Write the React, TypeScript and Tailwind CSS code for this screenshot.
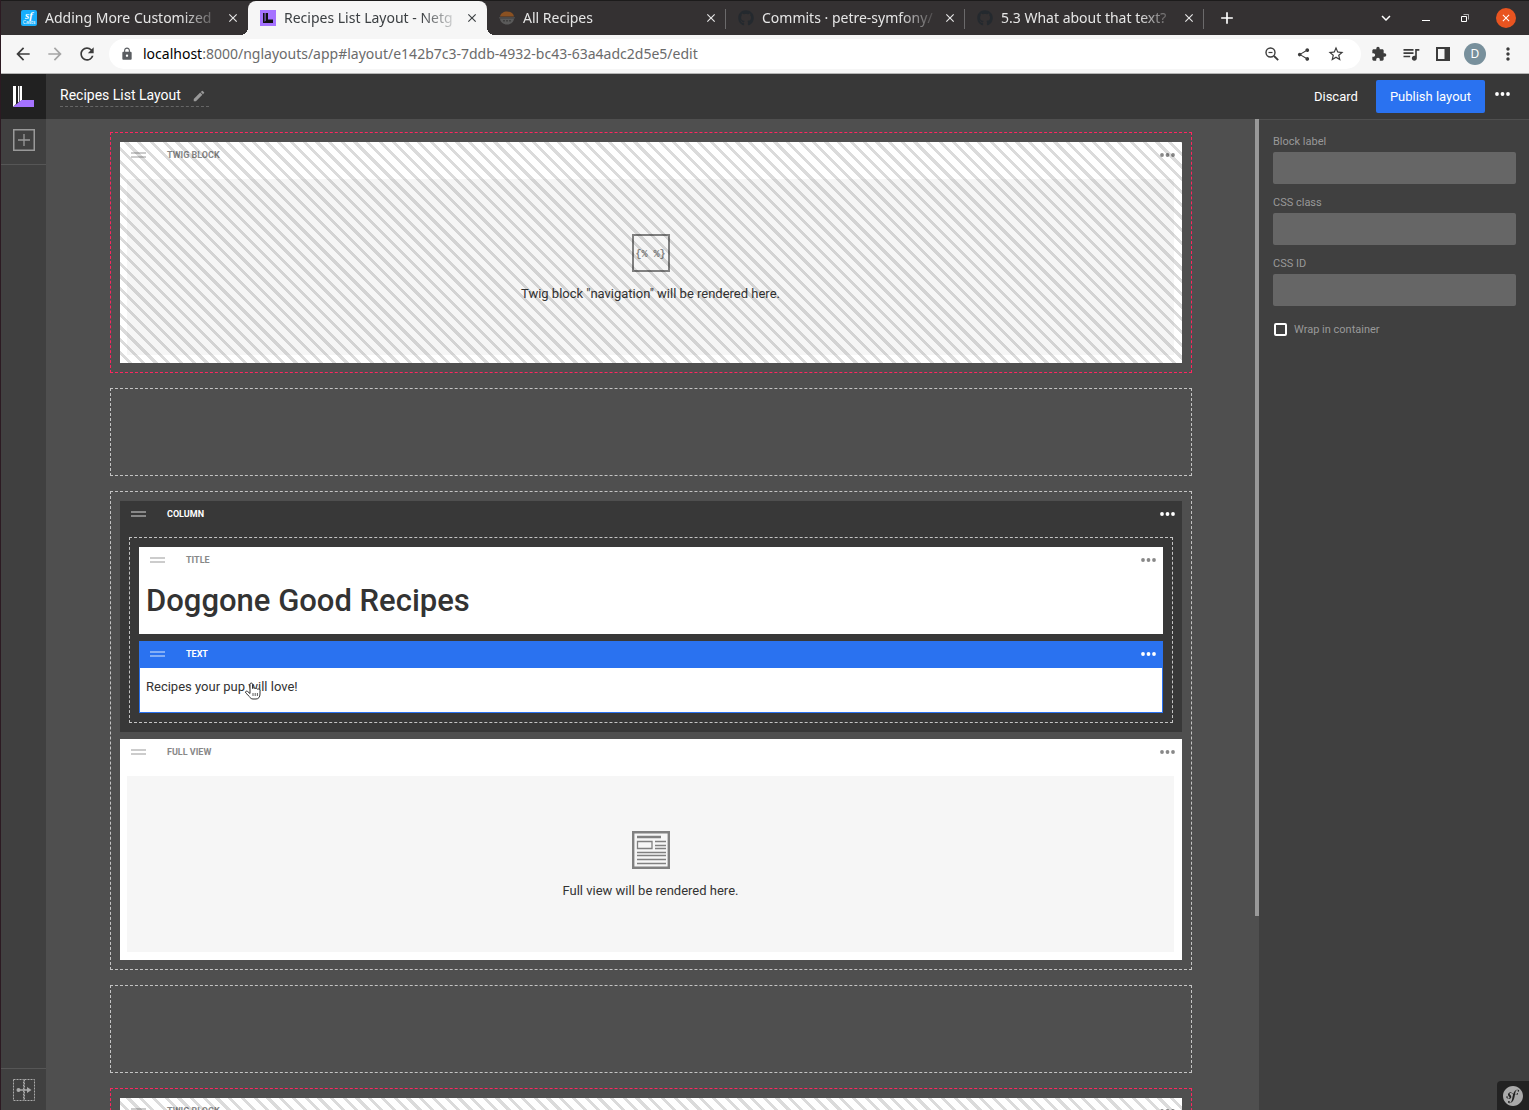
import type { ReactNode } from "react";
import {
  MdArrowBack,
  MdArrowForward,
  MdClose,
  MdEdit,
  MdExtension,
  MdKeyboardArrowDown,
  MdLock,
  MdMoreVert,
  MdQueueMusic,
  MdRefresh,
  MdShare,
  MdStarBorder,
  MdAdd,
} from "react-icons/md";
import { FaGithub } from "react-icons/fa";
import { SiSymfony } from "react-icons/si";

const chromeFont = "font-['Noto_Sans',sans-serif]";

function LayoutsFavicon() {
  return (
    <svg viewBox="0 0 16 16" className="size-4">
      <rect width="16" height="16" fill="#a572ff" />
      <path d="M3 3h1.600v8.600L3 13zM5.600 3h2.400v6.500h5V13H3l2.600-2.200z" fill="#111" />
    </svg>
  );
}

function BurgerFavicon() {
  return (
    <svg viewBox="0 0 16 16" className="size-4">
      <path d="M1 6.500C1.500 3.500 4.500 1.500 8 1.500S14.500 3.500 15 6.500z" fill="#8a5122" />
      <path d="M0 7h16v1.500H0z" fill="#4a4a4a" />
      <path d="M1 8.500h14c-.3 3.500-3 6-7 6s-6.700-2.500-7-6z" fill="#5a5a5a" />
      <path d="M4 10h2v1.500H4zM7 10h2v1.500H7zM10 10h2v1.500h-2z" fill="#3f3f3f" />
    </svg>
  );
}

function SfCastsFavicon() {
  return (
    <span className="flex size-4 flex-col items-center justify-center rounded-xs bg-[#18aefc] text-white">
      <span className="font-['Liberation_Serif',serif] text-[11px] leading-[9px] font-bold italic">sf</span>
      <span className="text-[5px] leading-[5px]">Casts</span>
    </span>
  );
}

function ZoomOutIcon() {
  return (
    <svg viewBox="0 0 14 14" className="size-3.5" fill="none" stroke="currentColor" strokeWidth="1.400">
      <circle cx="5.500" cy="5.500" r="4.500" />
      <path d="M9 9l4.200 4.200" strokeWidth="1.800" />
      <path d="M3.500 5.500h4" strokeWidth="1.200" />
    </svg>
  );
}

type TabProps = { icon: ReactNode; title: string; active?: boolean; divider?: boolean };

function Tab({ icon, title, active, divider }: TabProps) {
  return (
    <div
      className={
        "relative flex w-[239px] min-w-0 items-center gap-2 pr-2 pl-3 " +
        (active ? "rounded-t-lg bg-[#f6f6f6] text-[#3c4043]" : "text-[#e6e6e6]")
      }
    >
      {active && (
        <>
          <span className="absolute bottom-0 -left-2 size-2 bg-[radial-gradient(circle_at_0_0,transparent_8px,#f6f6f6_8px)]" />
          <span className="absolute -right-2 bottom-0 size-2 bg-[radial-gradient(circle_at_100%_0,transparent_8px,#f6f6f6_8px)]" />
        </>
      )}
      <span className="shrink-0">{icon}</span>
      <span className="min-w-0 flex-1 overflow-hidden text-sm whitespace-nowrap [mask-image:linear-gradient(to_right,black_calc(100%-40px),transparent)]">
        {title}
      </span>
      <button aria-label={"Close " + title} className="-ml-1 shrink-0">
        <MdClose className="size-3.5" />
      </button>
      {divider && <span className="absolute top-2 right-0 h-5 w-px bg-[#6b6a6b]" />}
    </div>
  );
}

function BrowserChrome() {
  return (
    <div className={"shrink-0 " + chromeFont}>
      <div className="flex h-[35px] border-t border-[#1c1b1b] bg-[#343132] pl-2">
        <Tab icon={<SfCastsFavicon />} title="Adding More Customized" />
        <Tab icon={<LayoutsFavicon />} title="Recipes List Layout - Netg" active />
        <Tab icon={<BurgerFavicon />} title="All Recipes" divider />
        <Tab icon={<FaGithub className="size-4 text-[#24292e]" />} title="Commits · petre-symfony/" divider />
        <Tab icon={<FaGithub className="size-4 text-[#24292e]" />} title="5.3 What about that text?" divider />
        <button aria-label="New tab" className="ml-[13px] text-white">
          <MdAdd className="size-5" />
        </button>
        <div className="ml-auto flex items-center gap-[23px] pr-[13px] text-white">
          <button aria-label="Search tabs">
            <MdKeyboardArrowDown className="size-[18px]" />
          </button>
          <button aria-label="Minimize" className="flex size-4 items-center justify-center">
            <span className="mt-1 h-px w-2 bg-white" />
          </button>
          <button aria-label="Restore" className="flex size-4 items-center justify-center">
            <svg viewBox="0 0 8 8" className="size-2 overflow-visible" fill="none" stroke="white">
              <path d="M.5 2.500h5v5h-5z" />
              <path d="M2.500 .5h5v5" strokeOpacity=".6" />
            </svg>
          </button>
          <button aria-label="Close window" className="flex size-5 items-center justify-center rounded-full bg-[#e95420]">
            <MdClose className="size-3" />
          </button>
        </div>
      </div>
      <div className="flex h-[39px] items-center border-b border-[#b4b4b4] bg-[#f6f6f6] pr-[11px] pl-3 text-[#3c3c3c]">
        <div className="flex items-center gap-3">
          <button aria-label="Back">
            <MdArrowBack className="size-5" />
          </button>
          <button aria-label="Forward" className="text-[#a5a5a5]">
            <MdArrowForward className="size-5" />
          </button>
          <button aria-label="Reload">
            <MdRefresh className="size-5" />
          </button>
        </div>
        <div className="mr-[7px] ml-3 flex h-[30px] flex-1 items-center rounded-full bg-white pr-4 pl-[11px]">
          <MdLock className="mr-[9px] size-3.5 text-[#5a5d61]" />
          <a href="#layout" className="flex-1 text-sm text-[#6b6b6b]">
            <span className="text-black">localhost</span>
            :8000/nglayouts/app#layout/e142b7c3-7ddb-4932-bc43-63a4adc2d5e5/edit
          </a>
          <div className="flex items-center gap-4">
            <button aria-label="Zoom" className="mr-px">
              <ZoomOutIcon />
            </button>
            <button aria-label="Share">
              <MdShare className="size-[15px]" />
            </button>
            <button aria-label="Bookmark">
              <MdStarBorder className="size-[18px]" />
            </button>
          </div>
        </div>
        <div className="flex items-center pl-[3px]">
          <button aria-label="Extensions">
            <MdExtension className="size-4" />
          </button>
          <button aria-label="Media" className="ml-3.5">
            <MdQueueMusic className="size-5" />
          </button>
          <button aria-label="Side panel" className="ml-[15px]">
            <svg viewBox="0 0 14 14" className="size-3.5" fill="none">
              <path d="M1 1h12v12H1z" stroke="#3c3c3c" strokeWidth="2" />
              <path d="M8.500 0H14v14H8.500z" fill="#3c3c3c" />
            </svg>
          </button>
          <button
            aria-label="Profile"
            className="ml-3.5 flex size-[22px] items-center justify-center rounded-full bg-[#78909c] text-xs text-white"
          >
            D
          </button>
          <button aria-label="Menu" className="ml-3">
            <MdMoreVert className="size-5" />
          </button>
        </div>
      </div>
    </div>
  );
}

function Dots({ className }: { className: string }) {
  return (
    <svg viewBox="0 0 15 4" className={"h-1 w-[15px] " + className} fill="currentColor">
      <circle cx="2" cy="2" r="1.900" />
      <circle cx="7.500" cy="2" r="1.900" />
      <circle cx="13" cy="2" r="1.900" />
    </svg>
  );
}

function AppHeader() {
  return (
    <header className="flex h-[45px] shrink-0 bg-[#383838] text-white">
      <a href="#home" aria-label="Home" className="flex w-[45px] items-center justify-center bg-[#212121]">
        <svg viewBox="0 0 21 21" className="size-[21px]">
          <path d="M0 0h3v18l-3 3zM5 0h1.300v15.500L5 16.500zM7 0h2v14l-2 1.500z" fill="#fff" />
          <path d="M0 21l8.500-7H21v7z" fill="#a572ff" />
        </svg>
      </a>
      <div className="flex flex-1 items-start justify-between pr-[19px] pl-3.5">
        <button className="mt-3 flex h-[21px] items-start gap-[11px] border-b border-dashed border-[#666] pr-[3px] text-sm leading-[18px]">
          Recipes List Layout
          <MdEdit className="mt-[3px] size-3.5 text-[#999]" />
        </button>
        <div className="flex text-[13px]">
          <button className="mt-1.5 h-[33px] px-[18px]">Discard</button>
          <button className="mt-1.5 h-[33px] rounded-xs bg-[#2a72f0] px-3.5">Publish layout</button>
          <button aria-label="More actions" className="mt-[18px] ml-2.5 h-1">
            <Dots className="text-white" />
          </button>
        </div>
      </div>
    </header>
  );
}

function SideBar() {
  return (
    <nav className="flex w-[45px] shrink-0 flex-col justify-between bg-[#404040]">
      <button
        aria-label="Add block"
        className="flex h-[46px] items-center justify-center border-b border-[#565656] pb-[3px]"
      >
        <svg viewBox="0 0 22 22" className="size-[22px]" fill="none" stroke="#999">
          <path d="M.75 .75h20.500v20.500H.75z" strokeWidth="1.500" />
          <path d="M11 5v12M5 11h12" strokeWidth="1.300" />
        </svg>
      </button>
      <button
        aria-label="Linked zones"
        className="flex h-[42px] items-center justify-center border-t border-[#565656]"
      >
        <svg viewBox="0 0 22 22" className="size-[22px]" fill="none" stroke="#aaa">
          <path d="M.5 .5h10v21H.5zM11.500 .5h10v21h-10z" strokeDasharray="2 1" />
          <path d="M5 11h10" strokeWidth="1.500" />
          <circle cx="5.500" cy="11" r="2" fill="#aaa" stroke="none" />
          <path d="M14 8l4.500 3-4.500 3z" fill="#aaa" stroke="none" />
        </svg>
      </button>
    </nav>
  );
}

function Zone({ linked, inner, children }: { linked?: boolean; inner?: boolean; children?: ReactNode }) {
  return (
    <section
      className={
        "flex shrink-0 flex-col gap-[7px] border border-dashed p-[9px] " +
        (inner ? "" : "min-h-[88px] ") +
        (linked ? "border-[#ff2560]" : "border-[#c4c4c4]")
      }
    >
      {children}
    </section>
  );
}

const tones = {
  light: { box: "bg-white", head: "text-[#888]", bar: "bg-[#ccc]" },
  dark: { box: "bg-[#383838]", head: "text-white", bar: "bg-[#888]" },
  active: { box: "border border-t-0 border-[#2a72f0] bg-white", head: "-mx-px bg-[#2a72f0] text-white", bar: "bg-[#83aef6]" },
};

type BlockProps = { name: string; tone?: keyof typeof tones; striped?: boolean; children: ReactNode };

function Block({ name, tone = "light", striped, children }: BlockProps) {
  const t = tones[tone];
  return (
    <article className={"relative " + t.box}>
      <div className={"flex h-[27px] items-center pr-[7px] pb-0.5 pl-[11px] " + t.head}>
        <span className="mr-[21px] flex w-[15px] flex-col gap-0.5">
          <span className={"h-0.5 " + t.bar} />
          <span className={"h-0.5 " + t.bar} />
        </span>
        <h2 className="pt-0.5 text-[9px] font-bold uppercase">{name}</h2>
        <button aria-label={name + " options"} className="ml-auto">
          <Dots className="text-current" />
        </button>
      </div>
      {children}
      {striped && (
        <div className="pointer-events-none absolute inset-0 bg-[repeating-linear-gradient(45deg,transparent_0_6px,rgba(0,0,0,0.14)_6px_9px)]" />
      )}
    </article>
  );
}

function Placeholder({ icon, text }: { icon: ReactNode; text: string }) {
  return (
    <div className="pt-2.5 pr-2 pb-2 pl-[7px]">
      <div className="flex h-44 flex-col items-center bg-[#f6f6f6] pt-[55px] text-[13px] leading-5 text-[#333]">
        {icon}
        <p className="mt-3">{text}</p>
      </div>
    </div>
  );
}

function TwigIcon() {
  return (
    <span className="flex size-[38px] items-center justify-center border-2 border-[#808080] pt-1 font-['Liberation_Mono',monospace] text-[10px] font-bold text-[#888]">
      {"{% %}"}
    </span>
  );
}

function FullViewIcon() {
  return (
    <svg viewBox="0 0 38 38" className="size-[38px]" fill="none" stroke="#808080">
      <path d="M1.200 1.200h35.600v35.600H1.200z" strokeWidth="2.400" />
      <path d="M5 6h24" strokeWidth="2.500" />
      <path
        d="M5.500 10.500h14.500v7H5.500zM23 10.500h11M23 14.500h11M23 17.500h11M5 21.500h29M5 24.500h29M5 28.500h29M5 32.500h29"
        strokeWidth="1.300"
      />
    </svg>
  );
}

function HandCursor() {
  return (
    <svg viewBox="0 0 18 18" className="absolute top-3.5 left-[104px] size-[18px]" fill="#fff" stroke="#333">
      <path d="M6 10V2.200C6 .6 8.500 .6 8.500 2.200V6.500c.3-1 2.300-.9 2.500.3.500-.9 2.300-.7 2.500.5.600-.7 2.500-.4 2.500 1.200V12c0 3-1.500 5-4 5H9c-1.800 0-2.700-1-3.500-2.300L1.800 11C.8 9.800 2.300 8.600 3.500 9.400L6 11.500z" />
      <path d="M9 11v3M11.200 11v3M13.400 11v3" strokeWidth=".8" />
    </svg>
  );
}

function Canvas() {
  return (
    <main className="flex min-w-0 flex-1 bg-[#4f4f4f]">
      <div className="flex min-w-0 flex-1 flex-col gap-[15px] overflow-hidden pt-[13px] pr-[63px] pl-16">
        <Zone linked>
          <Block name="Twig block" striped>
            <Placeholder icon={<TwigIcon />} text={'Twig block "navigation" will be rendered here.'} />
          </Block>
        </Zone>
        <Zone />
        <Zone>
          <Block name="Column" tone="dark">
            <div className="p-[9px]">
              <Zone inner>
                <Block name="Title">
                  <h1 className="px-[7px] pt-[7px] pb-[13px] text-[31px] leading-10 font-medium text-[#333]">
                    Doggone Good Recipes
                  </h1>
                </Block>
                <Block name="Text" tone="active">
                  <div className="relative px-1.5 pt-[9px] pb-[15px] text-[13px] leading-5 text-[#333]">
                    <p>Recipes your pup will love!</p>
                    <HandCursor />
                  </div>
                </Block>
              </Zone>
            </div>
          </Block>
          <Block name="Full view">
            <Placeholder icon={<FullViewIcon />} text="Full view will be rendered here." />
          </Block>
        </Zone>
        <Zone />
        <Zone linked>
          <Block name="Twig block" striped>
            <div className="h-48" />
          </Block>
        </Zone>
      </div>
      <div className="h-[80.4%] w-1 shrink-0 bg-[#999]" />
    </main>
  );
}

function Field({ id, label }: { id: string; label: string }) {
  return (
    <div className="mb-[11px]">
      <label htmlFor={id} className="mb-[3px] block leading-[15px]">
        {label}
      </label>
      <input id={id} type="text" className="block h-8 w-full rounded-xs bg-[#666] px-2 text-white" />
    </div>
  );
}

function Inspector() {
  return (
    <aside className="w-[270px] shrink-0 border-t border-[#4f4f4f] bg-[#404040] pt-3.5 pr-[13px] pl-3.5 text-[11px] text-[#999]">
      <Field id="block-label" label="Block label" />
      <Field id="css-class" label="CSS class" />
      <Field id="css-id" label="CSS ID" />
      <label className="mt-4 ml-px flex items-center gap-[7px] leading-[15px]">
        <input type="checkbox" className="size-[13px] appearance-none rounded-xs border-2 border-white" />
        Wrap in container
      </label>
    </aside>
  );
}

export default function App() {
  return (
    <div className="flex h-screen flex-col overflow-hidden border-l border-[#2c1a22] font-[Roboto,sans-serif]">
      <BrowserChrome />
      <AppHeader />
      <div className="relative flex min-h-0 flex-1">
        <SideBar />
        <Canvas />
        <Inspector />
        <button
          aria-label="Symfony toolbar"
          className="absolute right-0 bottom-0 flex h-[29px] w-8 items-center justify-center rounded-tl-sm bg-[#222]"
        >
          <SiSymfony className="size-5 text-[#aaa]" />
        </button>
      </div>
    </div>
  );
}
